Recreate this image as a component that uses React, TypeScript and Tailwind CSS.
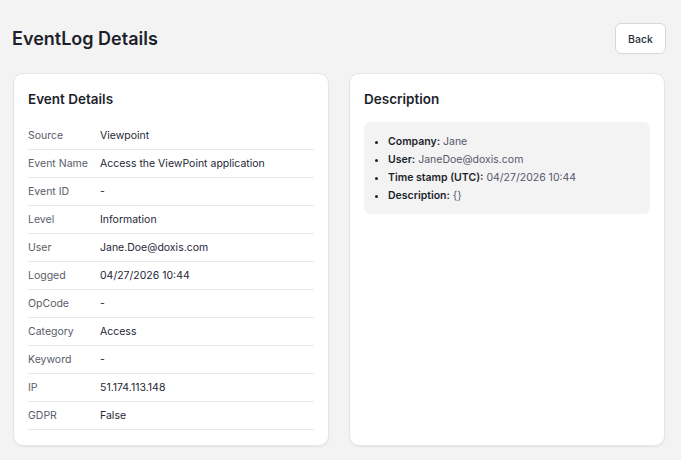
import React from "react";

const rows: [string, string][] = [
  ["Source", "Viewpoint"],
  ["Event Name", "Access the ViewPoint application"],
  ["Event ID", "-"],
  ["Level", "Information"],
  ["User", "Jane.Doe@doxis.com"],
  ["Logged", "04/27/2026 10:44"],
  ["OpCode", "-"],
  ["Category", "Access"],
  ["Keyword", "-"],
  ["IP", "51.174.113.148"],
  ["GDPR", "False"],
];

const desc: [string, string][] = [
  ["Company:", "Jane"],
  ["User:", "JaneDoe@doxis.com"],
  ["Time stamp (UTC):", "04/27/2026 10:44"],
  ["Description:", "{}"],
];

export default function App() {
  return (
    <div
      className="min-h-[460px] w-full bg-[#f3f3f3] pl-[13px] pr-[15px] pt-[23px] pb-[15px] text-[#1f2130]"
      style={{ fontFamily: "Inter, 'Noto Sans', sans-serif" }}
    >
      <div className="flex h-[31px] items-center justify-between">
        <h1 className="text-[18px] font-semibold leading-[32px] text-[#1d1f2b] -ml-[1px] mt-[1px]">
          EventLog Details
        </h1>
        <button className="h-[31px] w-[51px] rounded-[6px] border border-[#d8d8dc] bg-white pt-[2px] text-[10.5px] font-medium text-[#2a2c3a]">
          Back
        </button>
      </div>
      <div className="mt-[19px] grid grid-cols-2 gap-[20px] pr-[1px]">
        <div className="rounded-[10px] border border-[#e6e6e6] bg-white px-[14px] pt-[15px] pb-[15px] shadow-[0_1px_2px_rgba(0,0,0,0.06)]">
          <h2 className="text-[13.5px] font-semibold leading-[20px] text-[#1d1f2b]">Event Details</h2>
          <div className="mt-[13px]">
            {rows.map(([k, v]) => (
              <div key={k} className="flex h-[28px] items-center border-b border-[#e8e8e8] pt-[1px] text-[10.5px]">
                <div className="w-[72px] shrink-0 text-[#5a5c68]">{k}</div>
                <div className="text-[#252735]">{v}</div>
              </div>
            ))}
          </div>
        </div>
        <div className="rounded-[10px] border border-[#e6e6e6] bg-white px-[14px] pt-[15px] pb-[15px] shadow-[0_1px_2px_rgba(0,0,0,0.06)]">
          <h2 className="text-[13.5px] font-semibold leading-[20px] text-[#1d1f2b]">Description</h2>
          <div className="mt-[13px] rounded-[6px] bg-[#f3f3f3] pt-[11px] pb-[9px] pl-[24px] pr-[10px]">
            <ul className="list-disc text-[10.5px] leading-[18px]">
              {desc.map(([k, v]) => (
                <li key={k}>
                  <span className="font-semibold text-[#1d1f2b]">{k}</span>{" "}
                  <span className="text-[#55576a]">{v}</span>
                </li>
              ))}
            </ul>
          </div>
        </div>
      </div>
    </div>
  );
}
